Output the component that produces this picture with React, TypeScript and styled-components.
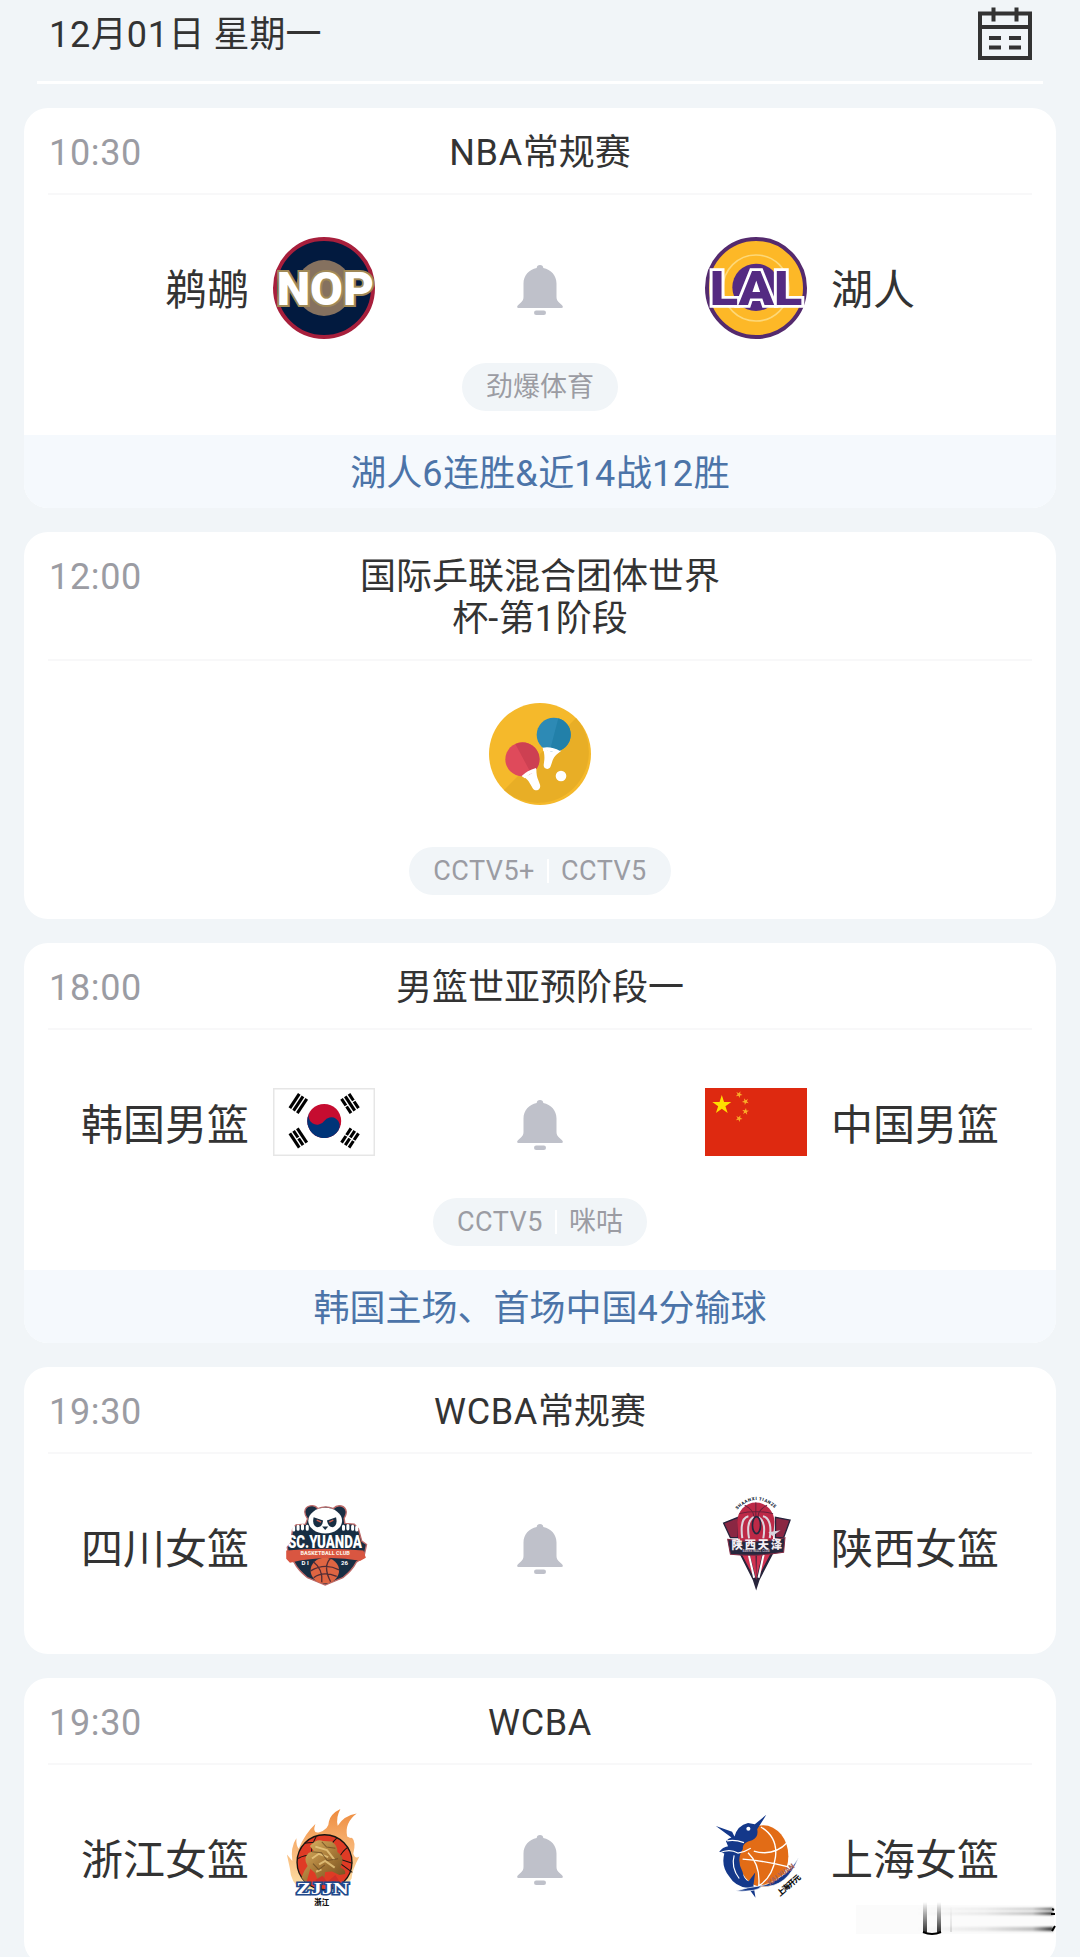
import { Fragment, ReactNode } from "react";
import styled, { createGlobalStyle } from "styled-components";

const Color = {
  BG: "#f1f5f8",
  TEXT: "#333333",
  MUTED: "#9b9ca3",
  NOTE: "#4c74a8",
  NOTE_BG: "#f5f9fd",
  BELL: "#bfc1ca",
};

const GlobalStyle = createGlobalStyle`
  * {
    box-sizing: border-box;
  }

  body {
    margin: 0;
    background-color: ${Color.BG};
    color: ${Color.TEXT};
    font-family: Roboto, "Noto Sans CJK SC", sans-serif;
  }
`;

const Page = styled.main`
  position: relative;
  width: 1080px;
  height: 1957px;
  overflow: hidden;
  background-color: ${Color.BG};
`;

const Header = styled.header`
  display: flex;
  justify-content: space-between;
  height: 84px;
  margin: 0 37px;
  padding: 0 11px 0 12px;
  border-bottom: 3px solid #fff;
`;

const DateLabel = styled.h1`
  margin: 0;
  font-size: 36px;
  font-weight: 400;
  line-height: 71px;
`;

const CalendarSvg = styled.svg`
  width: 54px;
  height: 54px;
  margin-top: 7px;
`;

const List = styled.div`
  display: flex;
  flex-direction: column;
  gap: 24px;
  padding: 24px 24px 0;
`;

const Card = styled.section`
  flex: none;
  overflow: hidden;
  border-radius: 24px;
  background-color: #fff;
`;

const CardHead = styled.div`
  display: grid;
  grid-template-columns: 1fr 372px 1fr;
  margin: 0 24px;
  padding: 24px 0 19px;
  border-bottom: 2px solid #f8f8f9;
  font-size: 36px;
  line-height: 42px;
`;

const Time = styled.span`
  padding-left: 1px;
  color: ${Color.MUTED};
`;

const Title = styled.h2`
  margin: 0;
  font-size: inherit;
  font-weight: 400;
  text-align: center;
`;

const Latin = styled.span`
  letter-spacing: 0.018em;
`;

const Body = styled.div<{ $plain?: boolean }>`
  display: flex;
  flex-direction: column;
  align-items: center;
  padding: 42px 0 ${(p) => (p.$plain ? 56 : 24)}px;
`;

const Versus = styled.div`
  display: grid;
  grid-template-columns: 1fr 330px 1fr;
  align-items: center;
  justify-items: center;
  width: 100%;
  height: 102px;
`;

const Team = styled.div<{ $home?: boolean }>`
  display: flex;
  flex-direction: ${(p) => (p.$home ? "row-reverse" : "row")};
  justify-self: ${(p) => (p.$home ? "end" : "start")};
  align-items: center;
  gap: 24px;
`;

const TeamName = styled.span`
  padding-top: 5px;
  font-size: 42px;
  line-height: 60px;
`;

const Logo = styled.svg`
  display: block;
  overflow: visible;
  width: 102px;
  height: 102px;
`;

const Flag = styled.svg`
  display: block;
  width: 102px;
  height: 68px;
  margin-bottom: 2px;
`;

const BellSvg = styled.svg`
  width: 46px;
  height: 50px;
  margin-top: 3px;
`;

const Channels = styled.div<{ $far?: boolean }>`
  display: flex;
  align-items: center;
  height: 48px;
  margin-top: ${(p) => (p.$far ? 42 : 24)}px;
  padding: 0 24px;
  border-radius: 24px;
  background-color: ${Color.BG};
  color: ${Color.MUTED};
  font-size: 27px;
  line-height: 49px;
`;

const Separator = styled.i`
  width: 2px;
  height: 24px;
  margin: 0 12px;
  background-color: #fff;
`;

const Note = styled.div`
  height: 73px;
  background-color: ${Color.NOTE_BG};
  color: ${Color.NOTE};
  font-size: 36px;
  line-height: 79px;
  text-align: center;
`;

const Smudge = styled.svg`
  position: absolute;
  right: 24px;
  bottom: 20px;
  width: 200px;
  height: 36px;
`;

// digits and latin letters need slightly looser tracking than the han text
const Mixed = ({ text }: { text: string }) => (
  <>
    {text.split(/([\x21-\x7e]+)/).map((part, i) =>
      i % 2 ? <Latin key={i}>{part}</Latin> : part
    )}
  </>
);

const Calendar = () => (
  <CalendarSvg viewBox="0 0 54 54" fill="none" stroke="#333" strokeWidth="4">
    <path d="M2 6.5h50V51H2zM2 20h50M15.500 .5v14M38.500 .5v14M11 31h12M31 31h12M11 40.500h12M31 40.500h12" />
  </CalendarSvg>
);

const Bell = () => (
  <BellSvg viewBox="0 0 46 50" fill={Color.BELL}>
    <path d="M23 0c2 0 3.200 1.300 3.300 3C34 4.500 39.500 10.500 39.500 18.500V32c0 2.500 1 4.200 2.800 5.800l2.500 2.200c2 2.200 1 3-1.300 3H2.500C.2 43-.8 42.200 1.200 40l2.500-2.200C5.500 36.200 6.500 34.500 6.500 32V18.500C6.500 10.500 12 4.500 19.700 3 19.800 1.300 21 0 23 0z" />
    <rect x="17" y="45.500" width="12" height="4.500" rx="2.200" />
  </BellSvg>
);

const Pelicans = () => (
  <Logo viewBox="369 51 306 306">
    <circle cx="522" cy="204" r="147" fill="#021a3f" stroke="#a71f3c" strokeWidth="12" />
    <circle cx="522" cy="204" r="84" fill="#85715f" />
    <text
      x="526"
      y="254"
      textAnchor="middle"
      textLength="292"
      lengthAdjust="spacingAndGlyphs"
      fontFamily="Roboto, sans-serif"
      fontWeight="900"
      fontSize="136"
      fill="#fff"
      stroke="#a08957"
      strokeWidth="12"
      paintOrder="stroke"
    >
      NOP
    </text>
  </Logo>
);

const Lakers = () => (
  <Logo viewBox="345 51 306 306">
    <circle cx="498" cy="204" r="147" fill="#fdb827" stroke="#542a6e" strokeWidth="12" />
    <circle cx="498" cy="204" r="99" fill="none" stroke="#fdd878" strokeWidth="5" />
    <circle cx="498" cy="202" r="71" fill="#542a82" />
    <text
      x="498"
      y="254"
      textAnchor="middle"
      textLength="278"
      lengthAdjust="spacingAndGlyphs"
      fontFamily="Roboto, sans-serif"
      fontWeight="900"
      fontSize="143"
      fill="#542a82"
      stroke="#fff"
      strokeWidth="16"
      paintOrder="stroke"
    >
      LAL
    </text>
  </Logo>
);

const TableTennis = () => (
  <Logo viewBox="447 549 306 306">
    <circle cx="600" cy="702" r="153" fill="#f5b92b" />
    <path d="M708 594A153 153 0 0 1 492 810z" fill="#e8ae26" />
    <path d="M608 680l56 12c-16 12-24 20-27 32l-5 15c-4 12-22 10-21-4l2-16c1-14-1-22-5-39z" fill="#fff" />
    <circle cx="641" cy="644" r="51" fill="#2d8ab5" />
    <path d="M655 595A51 51 0 0 1 656 693L630 690z" fill="#2280a9" />
    <path d="M608 683q26-5 52 10l-10 8q-18-12-40-8z" fill="#fff" />
    <path d="M545 768l44-23c0 17 2 28 6 36l5 13c4 14-12 23-21 12l-7-12c-7-13-13-20-27-26z" fill="#fff" />
    <circle cx="547" cy="718" r="51" fill="#df4a5b" />
    <path d="M526 672A51 51 0 0 1 591 745L571 756z" fill="#cd4052" />
    <path d="M545 768q16-16 43-24v13q-17 2-34 18z" fill="#fff" />
    <circle cx="663" cy="768" r="16" fill="#fff" />
  </Logo>
);

const trigrams = [
  { x: 25.300, y: 15.500, turn: 33.700, bars: [1, 1, 1] },
  { x: 77, y: 15.500, turn: -33.700, bars: [0, 1, 0] },
  { x: 25.300, y: 50, turn: -33.700, bars: [1, 0, 1] },
  { x: 77, y: 50, turn: 33.700, bars: [0, 0, 0] },
];

const Korea = () => (
  <Flag viewBox="0 0 102 68">
    <rect x=".75" y=".75" width="100.500" height="66.500" fill="#fff" stroke="#e6e6e6" strokeWidth="1.500" />
    <g transform="translate(51.200 33) rotate(33.700)">
      <circle r="17" fill="#c60c30" />
      <path d="M-17 0A8.500 8.500 0 0 0 0 0A8.500 8.500 0 0 1 17 0A17 17 0 0 1-17 0z" fill="#003478" />
    </g>
    {trigrams.map(({ x, y, turn, bars }) => (
      <g key={`${x}-${y}`} transform={`translate(${x} ${y}) rotate(${turn})`} stroke="#000" strokeWidth="3.100">
        {bars.map((solid, i) => (
          <path key={i} d={solid ? "M0-8.500V8.500" : "M0-8.500V-.6M0 .6V8.500"} transform={`translate(${(i - 1) * 4.500} 0)`} />
        ))}
      </g>
    ))}
  </Flag>
);

const star = "M0-10L2.250-3.090H9.510L3.630 1.180 5.880 8.090 0 3.820-5.880 8.090-3.630 1.180-9.510-3.090H-2.250z";

const China = () => (
  <Flag viewBox="0 0 102 68">
    <rect width="102" height="68" fill="#de2910" />
    <g fill="#ffde00">
      <path d={star} transform="translate(16.800 17)" />
      <g fill="#f9ac28">
        <path d={star} transform="translate(34 6.500) rotate(24) scale(.36)" />
        <path d={star} transform="translate(40.500 13.500) rotate(46) scale(.36)" />
        <path d={star} transform="translate(40.500 23.500) rotate(8) scale(.36)" />
        <path d={star} transform="translate(34 30.500) rotate(24) scale(.36)" />
      </g>
    </g>
  </Flag>
);

const Sichuan = () => (
  <Logo viewBox="38 53 301 301">
    <path
      d="M132 98c2-18 28-22 38-8q24-10 46 0c14-15 36-8 38 9 1 10-4 15-6 20l2 15 28 2 12 14 10 36 14 10-8 38-22 14q-12 24-40 46l-52 22-52-22q-28-22-40-46l-14-8-6-36 10-12 6-42 10-12 28-2 6-16c-4-6-9-12-8-22z"
      fill="#182e43"
      stroke="#bd6a69"
      strokeWidth="4"
    />
    <ellipse cx="192" cy="126" rx="50" ry="38" fill="#fff" />
    <path d="M158 116l28 9q-2 20-18 20-16-6-10-29zM224 116l-27 9q4 20 18 20 15-6 9-29z" fill="#182e43" />
    <path d="M167 124l13 6M216 124l-12 6" stroke="#d05c4e" strokeWidth="4" />
    <path d="M183 143h18l-9 10z" fill="#182e43" />
    <path d="M99 145v8M112 142v9M125 140v10M139 142v9M246 142v9M259 140v10M273 142v9M285 145v8" stroke="#fff" strokeWidth="9" strokeLinecap="round" />
    <text
      transform="translate(191 205) scale(1 1.400)"
      textAnchor="middle"
      textLength="218"
      lengthAdjust="spacingAndGlyphs"
      fontFamily="Roboto, sans-serif"
      fontWeight="900"
      fontSize="38"
      fill="#fff"
    >
      SC.YUANDA
    </text>
    <path d="M77 214q114-10 228 0l7 21-16 9q-104-18-208 6l-11-12z" fill="#d95641" />
    <text x="192" y="228" textAnchor="middle" textLength="146" lengthAdjust="spacingAndGlyphs" fontFamily="Roboto, sans-serif" fontWeight="900" fontSize="16" fill="#fbe9df">
      BASKETBALL CLUB
    </text>
    <ellipse cx="191" cy="273" rx="42" ry="38" fill="#df6542" />
    <path d="M149 274q42-25 84-3M157 247q29 22 25 61M208 237q-24 24 0 69M158 294q26-20 68-4" fill="none" stroke="#512d35" strokeWidth="4" />
    <text x="133" y="257" textAnchor="middle" fontFamily="Roboto, sans-serif" fontWeight="700" fontSize="18" fill="#fff">
      D I
    </text>
    <text x="249" y="257" textAnchor="middle" fontFamily="Roboto, sans-serif" fontWeight="700" fontSize="18" fill="#fff">
      26
    </text>
  </Logo>
);

const Shaanxi = () => (
  <Logo viewBox="15 53 301 301">
    <defs>
      <path id="shaanxi-arc" d="M110 94Q166 36 226 94" />
    </defs>
    <text fontFamily="Roboto, sans-serif" fontWeight="900" fontSize="13" fill="#222a3c">
      <textPath href="#shaanxi-arc" textLength="126">
        SHAANXI TIANZE
      </textPath>
    </text>
    <path d="M70 133l43-17v60H90zM266 124l-43-8v60h24z" fill="#8a2743" stroke="#26233c" strokeWidth="4" />
    <path d="M110 130a55 58 0 0 1 110 0l-5 56h-102z" fill="#bd2947" />
    <path d="M116 105q50-12 100 0M165 72v46M132 80q28 16 27 34M198 80q-28 16-26 34" fill="none" stroke="#68213b" strokeWidth="3" />
    <path d="M125 177c-6-45 3-61 18-64M145 178c-7-38 1-56 14-63M206 177c7-43-5-61-20-64M187 178c7-38-2-56-14-63" fill="none" stroke="#ddd4dd" strokeWidth="6" />
    <ellipse cx="167" cy="139" rx="12" ry="25" fill="#bd2947" stroke="#252740" strokeWidth="5" />
    <path d="M202 160l36-6-24 17z" fill="#d8d5df" />
    <path d="M112 214h109l-45 87-10 31-10-31z" fill="#28243b" />
    <path d="M119 216l22 4 14 65zM146 220l18 2 2 78zM185 220l-17 2-2 78zM212 216l-21 5-16 65z" fill="#d03150" />
    <path d="M142 217l18 77M190 217l-17 77" stroke="#fff" strokeWidth="6" />
    <path d="M82 181q84 13 169-5l-4 43q-80 14-157 6z" fill="#27273e" stroke="#822a43" strokeWidth="3" />
    <text x="168" y="209" textAnchor="middle" textLength="150" fontFamily="Noto Sans CJK SC, sans-serif" fontWeight="900" fontSize="33" fill="#f4eff3">
      陕西天泽
    </text>
    <text x="166" y="219" textAnchor="middle" textLength="80" fontFamily="Roboto, sans-serif" fontWeight="700" fontSize="9" fill="#bcaebc">
      BASKETBALL CLUB
    </text>
  </Logo>
);

const Zhejiang = () => (
  <Logo viewBox="38 53 301 301">
    <defs>
      <linearGradient id="flame" x1="0" y1="0" x2="0" y2="1">
        <stop offset="0" stopColor="#ee8a3c" />
        <stop offset=".5" stopColor="#f8b87a" />
        <stop offset="1" stopColor="#fde3a8" />
      </linearGradient>
      <linearGradient id="lion" x1="0" y1="0" x2="1" y2="1">
        <stop offset="0" stopColor="#e0b866" />
        <stop offset=".5" stopColor="#a87a38" />
        <stop offset="1" stopColor="#6d4b1d" />
      </linearGradient>
    </defs>
    <path
      d="M120 296Q90 274 88 235L79 193Q92 208 95 212 89 172 107 145 106 168 114 176 132 132 163 103 153 132 173 128 203 120 203 96 208 73 237 59 223 84 229 108 248 78 285 72 248 100 257 140 273 148 270 142 284 155 275 191 280 207 293 199 270 242 270 264 255 290 230 300z"
      fill="url(#flame)"
    />
    <circle cx="190" cy="216" r="81" fill="#df3b25" stroke="#171411" strokeWidth="4" />
    <path d="M132 160q66-14 102 58l38 28M112 205q44-28 160 14M166 139q-18 30-14 62M226 145q-36 34-24 74M258 172q-38 30-28 74" fill="none" stroke="#1c1612" strokeWidth="3" />
    <path
      d="M147 168q18-22 39-15l25 2q18 12 17 31 20 14 14 30l-5 16q17 5 14 19l-17 3-22-11-20 2-5 31-17-8-8-20-14-13-12 43-14-17q8-22 18-34-14-22 3-38l15-7z"
      fill="url(#lion)"
    />
    <path d="M163 170l34 10 22 28M153 205l20-14 28 10M174 222l18-10 28 20M165 244l16-7" fill="none" stroke="#edce86" strokeWidth="6" opacity=".75" />
    <path d="M182 156l14 15 26 4M153 185l28 3 17 23 32-5M156 220l17 18 18-14" fill="none" stroke="#62451f" strokeWidth="3" opacity=".7" />
    <path d="M164 268l20-12 14 18 24-20 15 23-24 8h-46z" fill="#cf3029" />
    <text
      x="184"
      y="311"
      textAnchor="middle"
      textLength="155"
      lengthAdjust="spacingAndGlyphs"
      fontFamily="Liberation Serif, serif"
      fontWeight="700"
      fontSize="50"
      fill="#fff"
      stroke="#21498b"
      strokeWidth="9"
      paintOrder="stroke"
    >
      ZJJN
    </text>
    <text x="182" y="341" textAnchor="middle" fontFamily="Noto Sans CJK SC, sans-serif" fontWeight="900" fontSize="22" fill="#111">
      浙江
    </text>
  </Logo>
);

const Shanghai = () => (
  <Logo viewBox="15 53 301 301">
    <ellipse cx="187" cy="198" rx="74" ry="91" fill="#e26c16" />
    <path d="M180 112q50 30 43 88t-48 85M258 158q-40 42-99 25M126 207q72 6 132 22M142 188q39 37 31 105" fill="none" stroke="#fff" strokeWidth="4" />
    <path
      d="M47 109L95 126 102 140Q111 107 142 100L162 104 196 76 169 119Q174 142 154 151 123 158 127 177 106 207 126 245 130 269 144 272L163 246 158 284 164 321 143 292Q104 288 86 257 62 228 72 190L57 185Q67 172 83 169L77 154Q84 145 93 143z"
      fill="#14388a"
    />
    <path d="M57 189Q87 174 112 189 133 186 150 175M80 153Q102 148 130 158M101 196Q91 232 116 264" fill="none" stroke="#fff" strokeWidth="3.500" />
    <circle cx="143" cy="117" r="6" fill="#fff" />
    <path d="M106 301Q171 304 181 287 256 294 291 202 269 241 236 260 206 282 176 286 141 290 106 301z" fill="#14388a" stroke="#fff" strokeWidth="2" />
    <text transform="translate(206 285) rotate(-36)" textLength="92" lengthAdjust="spacingAndGlyphs" fontFamily="Roboto, sans-serif" fontWeight="900" fontSize="22" fill="#a96355">
      KAI YUAN
    </text>
    <text transform="translate(236 318) rotate(-41)" textLength="84" fontFamily="Noto Sans CJK SC, sans-serif" fontWeight="900" fontSize="23" fill="#111">
      上海开元
    </text>
  </Logo>
);

type Side = { name: string; logo: ReactNode };

type Match = {
  time: string;
  title: string;
  home?: Side;
  away?: Side;
  icon?: ReactNode;
  channels?: string[];
  note?: string;
};

const matches: Match[] = [
  {
    time: "10:30",
    title: "NBA常规赛",
    home: { name: "鹈鹕", logo: <Pelicans /> },
    away: { name: "湖人", logo: <Lakers /> },
    channels: ["劲爆体育"],
    note: "湖人6连胜&近14战12胜",
  },
  {
    time: "12:00",
    title: "国际乒联混合团体世界杯-第1阶段",
    icon: <TableTennis />,
    channels: ["CCTV5+", "CCTV5"],
  },
  {
    time: "18:00",
    title: "男篮世亚预阶段一",
    home: { name: "韩国男篮", logo: <Korea /> },
    away: { name: "中国男篮", logo: <China /> },
    channels: ["CCTV5", "咪咕"],
    note: "韩国主场、首场中国4分输球",
  },
  {
    time: "19:30",
    title: "WCBA常规赛",
    home: { name: "四川女篮", logo: <Sichuan /> },
    away: { name: "陕西女篮", logo: <Shaanxi /> },
  },
  {
    time: "19:30",
    title: "WCBA",
    home: { name: "浙江女篮", logo: <Zhejiang /> },
    away: { name: "上海女篮", logo: <Shanghai /> },
  },
];

const MatchCard = ({ match }: { match: Match }) => (
  <Card>
    <CardHead>
      <Time>
        <Mixed text={match.time} />
      </Time>
      <Title>
        <Mixed text={match.title} />
      </Title>
    </CardHead>
    <Body $plain={!match.channels}>
      {match.home && match.away ? (
        <Versus>
          <Team $home>
            {match.home.logo}
            <TeamName>{match.home.name}</TeamName>
          </Team>
          <Bell />
          <Team>
            {match.away.logo}
            <TeamName>{match.away.name}</TeamName>
          </Team>
        </Versus>
      ) : (
        match.icon
      )}
      {match.channels && (
        <Channels $far={!match.home}>
          {match.channels.map((channel, i) => (
            <Fragment key={channel}>
              {i > 0 && <Separator />}
              <span>
                <Mixed text={channel} />
              </span>
            </Fragment>
          ))}
        </Channels>
      )}
    </Body>
    {match.note && (
      <Note>
        <Mixed text={match.note} />
      </Note>
    )}
  </Card>
);

export default function App() {
  return (
    <Page>
      <GlobalStyle />
      <Header>
        <DateLabel>
          <Mixed text="12月01日 星期一" />
        </DateLabel>
        <Calendar />
      </Header>
      <List>
        {matches.map((match, i) => (
          <MatchCard key={i} match={match} />
        ))}
      </List>
      <Smudge viewBox="0 0 200 36">
        <defs>
          <linearGradient id="fade-x">
            <stop offset="0" stopColor="#000" stopOpacity="0" />
            <stop offset=".5" stopColor="#000" stopOpacity=".08" />
            <stop offset=".85" stopColor="#000" stopOpacity=".25" />
            <stop offset="1" stopColor="#000" stopOpacity=".8" />
          </linearGradient>
          <linearGradient id="fade-y" x1="0" y1="0" x2="0" y2="1">
            <stop offset="0" stopColor="#000" stopOpacity="0" />
            <stop offset="1" stopColor="#000" stopOpacity=".8" />
          </linearGradient>
          <filter id="soft" x="-10%" y="-100%" width="120%" height="300%">
            <feGaussianBlur stdDeviation="1" />
          </filter>
        </defs>
        <rect y="4" width="198" height="29" fill="#fbfbfb" />
        <g fill="url(#fade-x)" filter="url(#soft)">
          <rect x="60" y="7" width="137" height="2" />
          <rect x="60" y="11" width="137" height="3" />
          <rect x="60" y="26" width="137" height="4" />
        </g>
        <g fill="url(#fade-y)">
          <rect x="67" y="1" width="4" height="30" />
          <rect x="81" y="1" width="4" height="30" />
          <rect x="94" y="5" width="2" height="26" opacity=".15" />
        </g>
        <path d="M67 31q9 4 18 0M196 8l2 1M195 13h4M196 30l3-5" fill="none" stroke="#000" strokeWidth="2" />
      </Smudge>
    </Page>
  );
}
